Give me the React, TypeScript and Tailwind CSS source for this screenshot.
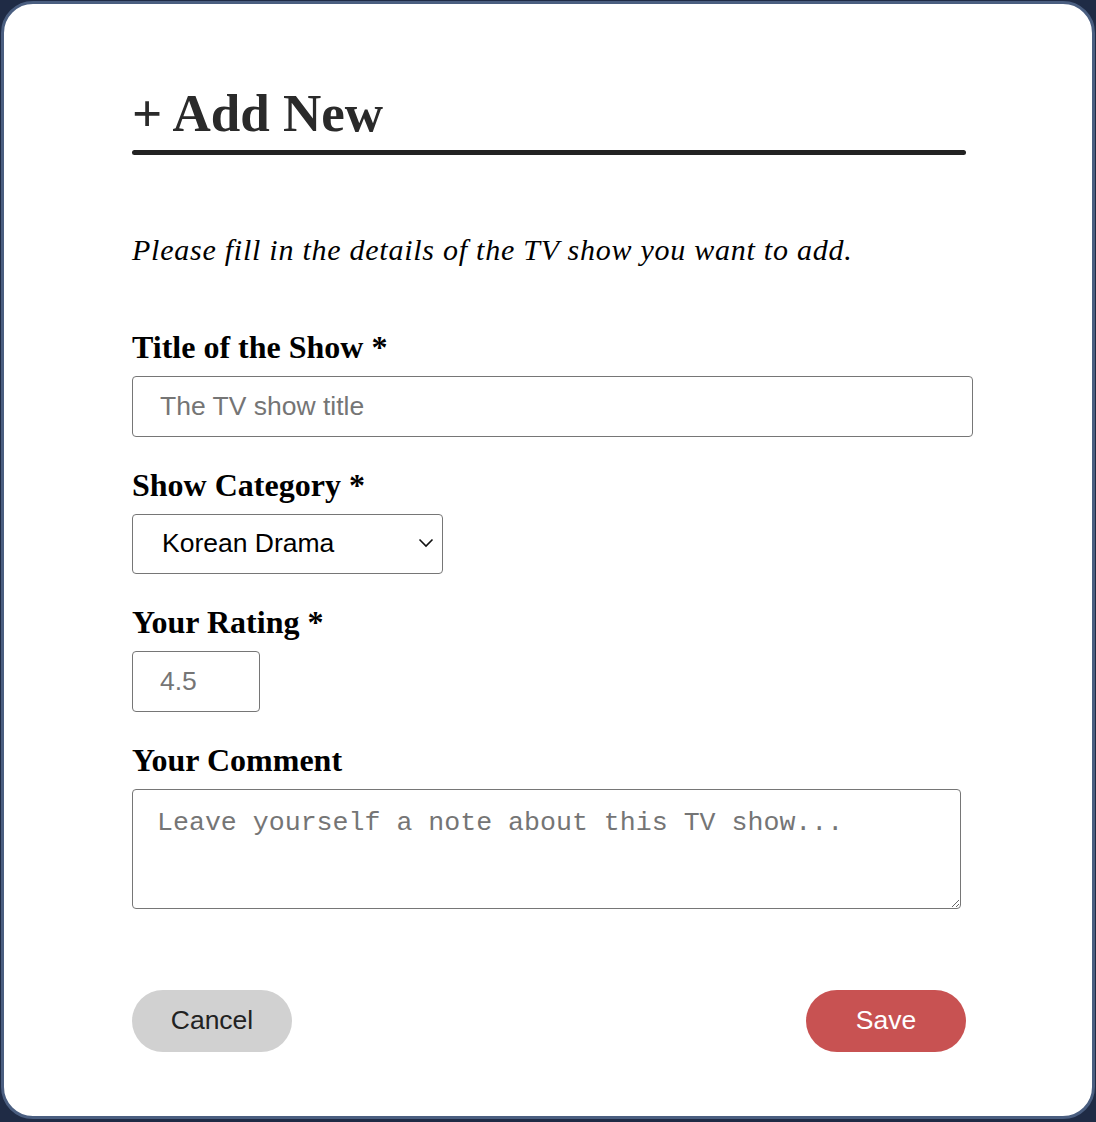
import { useState } from 'react';

const serif = "font-['Liberation_Serif','Times_New_Roman',serif]";
const sans = "font-['Liberation_Sans',Arial,sans-serif]";

const Label = ({ children }: { children: React.ReactNode }) => (
  <label className={`block ${serif} font-bold text-[32px] leading-[32px] text-black mb-[13px]`}>
    {children}
  </label>
);

const App = () => {
  const [category, setCategory] = useState('korean');

  return (
    <div className="w-[1096px] h-[1122px] bg-[#1f2b45] p-[1px] pb-[3px]">
      <div className="h-full bg-white border-[3px] border-[#4a5e80] rounded-[32px] pl-[128px] pt-[83px]">
        <div className="w-[834px]">
          <h1 className={`${serif} font-bold text-[53px] leading-[53px] text-[#2a2a2a]`}>+ Add New</h1>
          <div className="mt-[10px] h-[5px] rounded-full bg-[#222]" />

          <p className={`${serif} italic text-[30px] leading-[30px] tracking-[0.75px] text-black mt-[80px]`}>
            Please fill in the details of the TV show you want to add.
          </p>

          <div className="mt-[66px]">
            <Label>Title of the Show *</Label>
            <input
              type="text"
              placeholder="The TV show title"
              className={`block w-[841px] h-[61px] border border-[#767676] rounded-[4px] px-[27px] ${sans} text-[26.5px] text-black placeholder:text-[#757575] outline-none`}
            />
          </div>

          <div className="mt-[32px]">
            <Label>Show Category *</Label>
            <div className="relative w-[311px]">
              <select
                value={category}
                onChange={(e) => setCategory(e.target.value)}
                className={`block appearance-none w-[311px] h-[60px] border border-[#767676] rounded-[4px] pl-[29px] pr-[40px] ${sans} text-[26.5px] text-black bg-white outline-none`}
              >
                <option value="korean">Korean Drama</option>
                <option value="anime">Anime</option>
                <option value="sitcom">Sitcom</option>
                <option value="documentary">Documentary</option>
              </select>
              <svg
                className="absolute right-[9px] top-[24px] pointer-events-none"
                width="16"
                height="10"
                viewBox="0 0 16 10"
                fill="none"
              >
                <path d="M1.5 1.5 L8 8 L14.5 1.5" stroke="#111" strokeWidth="1.6" />
              </svg>
            </div>
          </div>

          <div className="mt-[32px]">
            <Label>Your Rating *</Label>
            <input
              type="text"
              placeholder="4.5"
              className={`block w-[128px] h-[61px] border border-[#767676] rounded-[4px] px-[27px] ${sans} text-[26.5px] text-black placeholder:text-[#757575] outline-none`}
            />
          </div>

          <div className="mt-[32px]">
            <Label>Your Comment</Label>
            <textarea
              placeholder="Leave yourself a note about this TV show..."
              className="block w-[829px] h-[120px] border border-[#767676] rounded-[4px] px-[24px] py-[17px] font-['Liberation_Mono','Courier_New',monospace] text-[26.6px] leading-[32px] text-black placeholder:text-[#757575] outline-none"
            />
          </div>

          <div className="mt-[81px] flex justify-between">
            <button className={`w-[160px] h-[62px] rounded-full bg-[#d1d1d1] ${sans} text-[26.5px] text-[#222]`}>
              Cancel
            </button>
            <button className={`w-[160px] h-[62px] rounded-full bg-[#c85252] ${sans} text-[26.5px] text-white`}>
              Save
            </button>
          </div>
        </div>
      </div>
    </div>
  );
};

export default App;
